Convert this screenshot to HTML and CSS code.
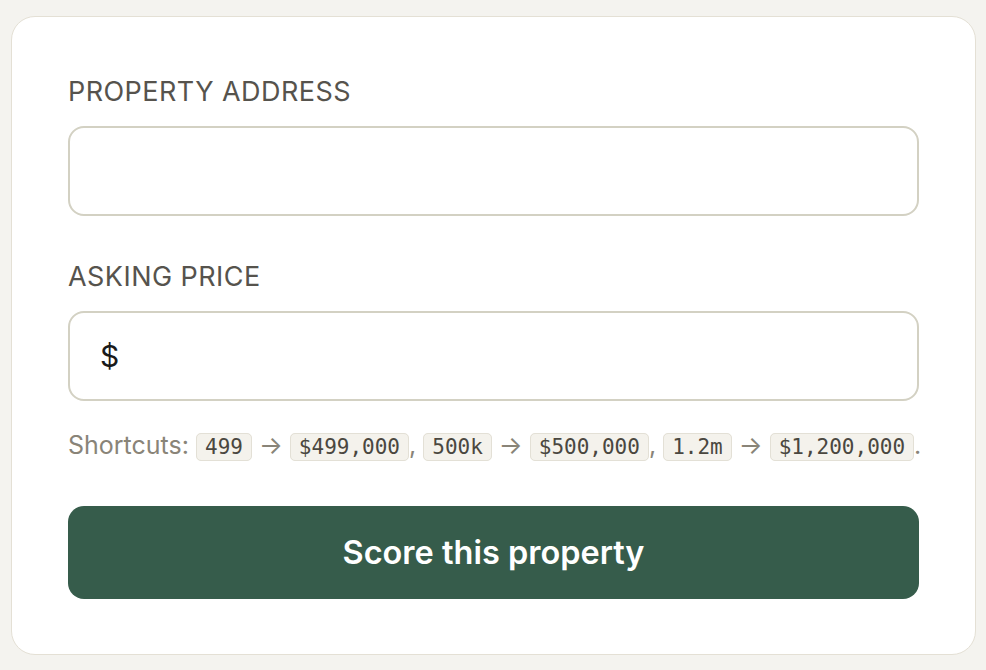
FILE: index.html
```html
<!DOCTYPE html>
<html lang="en">
<head>
    <meta charset="UTF-8">
    <meta name="viewport" content="width=device-width, initial-scale=1.0">
    <title>Score a property</title>
    <link rel="stylesheet" href="styles.css">
</head>
<body>
    <form class="score-card" onsubmit="return false;">
        <div class="field">
            <label class="field-label" for="address">Property address</label>
            <input class="text-input" id="address" type="text" autocomplete="off">
        </div>
        <div class="field">
            <label class="field-label" for="price">Asking price</label>
            <div class="price-input">
                <span class="currency">$</span>
                <input id="price" type="text" inputmode="decimal" autocomplete="off">
            </div>
            <p class="hint">
                Shortcuts: <code>499</code> → <code>$499,000</code>, <code>500k</code> → <code>$500,000</code>, <code>1.2m</code> → <code>$1,200,000</code>.
            </p>
        </div>
        <button class="submit" type="submit">Score this property</button>
    </form>
</body>
</html>
```

FILE: styles.css
```css
* { box-sizing: border-box; }
body {
    margin: 0;
    padding: 16px 10px 14px 11px;
    background: #f4f3ef;
    font-family: 'Inter', 'Noto Sans', sans-serif;
    color: #1c1b19;
}
.score-card {
    background: #fff;
    border: 1.5px solid #e4e0d5;
    border-radius: 24px;
    padding: 55px 56px 55px 56px;
    display: flex;
    flex-direction: column;
}
.field {
    display: flex;
    flex-direction: column;
    margin-bottom: 41px;
}
.field-label {
    font-size: 27px;
    line-height: 40px;
    color: #56534d;
    text-transform: uppercase;
    letter-spacing: 0.45px;
    margin-bottom: 14px;
}
.text-input,
.price-input {
    height: 90px;
    border: 2px solid #d3d1c3;
    border-radius: 16px;
    background: #fff;
}
.text-input {
    font: inherit;
    font-size: 28px;
    padding: 0 30px;
    outline: none;
}
.price-input {
    display: flex;
    align-items: center;
    padding: 0 30px;
}
.currency {
    font-size: 30px;
    color: #1a1a1a;
    margin-right: 10px;
}
.price-input input {
    flex: 1;
    border: none;
    outline: none;
    font: inherit;
    font-size: 28px;
}
.hint {
    margin: 26px 0 0 0;
    font-size: 25px;
    line-height: 36px;
    color: #898478;
    white-space: nowrap;
}
.hint code {
    font-family: 'DejaVu Sans Mono', monospace;
    font-size: 21px;
    color: #4a4740;
    background: #f4f2ec;
    border: 1.5px solid #e3e0d6;
    border-radius: 5px;
    padding: 1px 8px;
}
.field:last-of-type { margin-bottom: 41px; }
.submit {
    height: 93px;
    border: none;
    border-radius: 16px;
    background: #365c4b;
    color: #fff;
    font: inherit;
    font-size: 32.5px;
    font-weight: 600;
    cursor: pointer;
}
```
